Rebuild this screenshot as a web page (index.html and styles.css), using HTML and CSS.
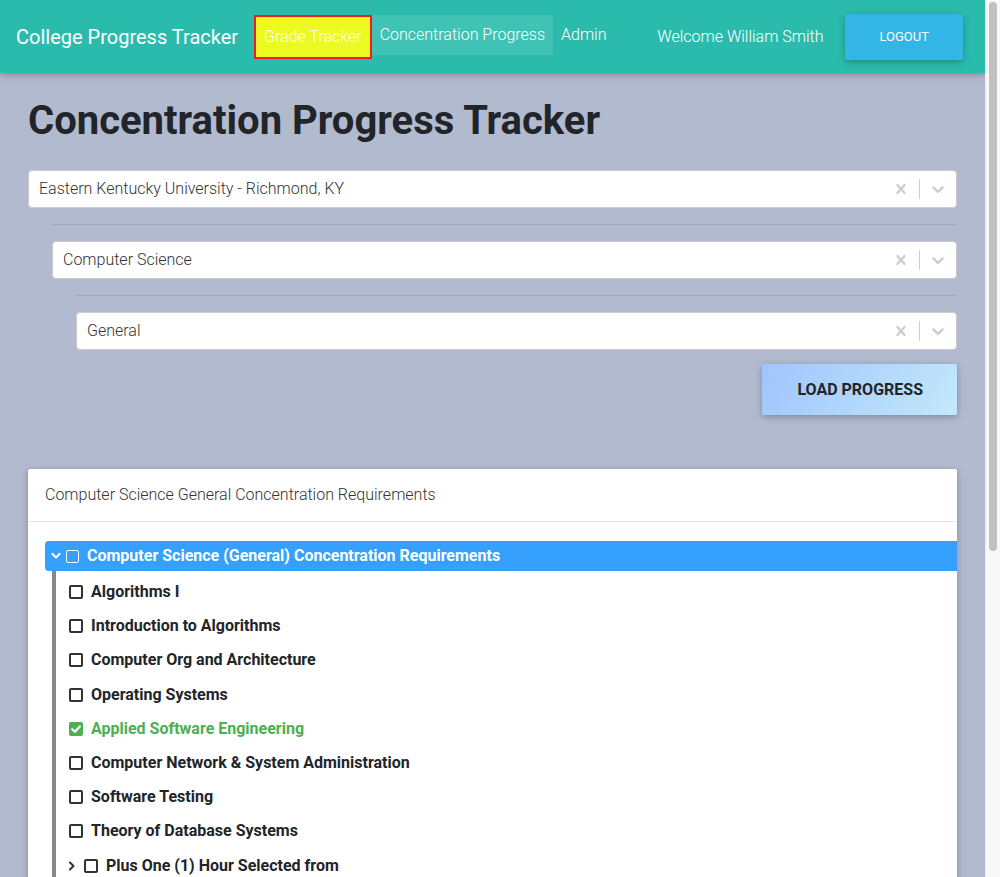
FILE: index.html
```html
<!DOCTYPE html>
<html lang="en">
<head>
<meta charset="utf-8">
<title>Concentration Progress Tracker</title>
<link rel="stylesheet" href="styles.css">
</head>
<body>
<div class="app">
<nav class="navbar">
  <a class="brand" href="#">College Progress Tracker</a>
  <ul class="nav-links">
    <li><a class="nav-link nav-link-highlight" href="#">Grade Tracker</a></li>
    <li><a class="nav-link nav-link-active" href="#">Concentration Progress</a></li>
    <li><a class="nav-link" href="#">Admin</a></li>
  </ul>
  <div class="nav-right">
    <span class="welcome">Welcome William Smith</span>
    <button class="btn-logout" type="button">Logout</button>
  </div>
</nav>

<main class="page">
  <h1 class="title">Concentration Progress Tracker</h1>

  <div class="select-group">
    <div class="select">
      <div class="select-value">Eastern Kentucky University - Richmond, KY</div>
      <div class="select-indicators">
        <span class="indicator"><svg viewBox="0 0 20 20" width="20" height="20"><path d="M14.348 14.849c-0.469 0.469-1.229 0.469-1.697 0l-2.651-3.030-2.651 3.029c-0.469 0.469-1.229 0.469-1.697 0-0.469-0.469-0.469-1.229 0-1.697l2.758-3.15-2.759-3.152c-0.469-0.469-0.469-1.228 0-1.697s1.228-0.469 1.697 0l2.652 3.031 2.651-3.031c0.469-0.469 1.228-0.469 1.697 0s0.469 1.229 0 1.697l-2.758 3.152 2.758 3.15c0.469 0.469 0.469 1.229 0 1.698z"/></svg></span>
        <span class="indicator-sep"></span>
        <span class="indicator"><svg viewBox="0 0 20 20" width="20" height="20"><path d="M4.516 7.548c0.436-0.446 1.043-0.481 1.576 0l3.908 3.747 3.908-3.747c0.533-0.481 1.141-0.446 1.574 0 0.436 0.445 0.408 1.197 0 1.615-0.406 0.418-4.695 4.502-4.695 4.502-0.217 0.223-0.502 0.335-0.787 0.335s-0.57-0.112-0.789-0.335c0 0-4.287-4.084-4.695-4.502s-0.436-1.17 0-1.615z"/></svg></span>
      </div>
    </div>

    <div class="nested">
      <hr class="divider">
      <div class="select">
        <div class="select-value">Computer Science</div>
        <div class="select-indicators">
          <span class="indicator"><svg viewBox="0 0 20 20" width="20" height="20"><path d="M14.348 14.849c-0.469 0.469-1.229 0.469-1.697 0l-2.651-3.030-2.651 3.029c-0.469 0.469-1.229 0.469-1.697 0-0.469-0.469-0.469-1.229 0-1.697l2.758-3.15-2.759-3.152c-0.469-0.469-0.469-1.228 0-1.697s1.228-0.469 1.697 0l2.652 3.031 2.651-3.031c0.469-0.469 1.228-0.469 1.697 0s0.469 1.229 0 1.697l-2.758 3.152 2.758 3.15c0.469 0.469 0.469 1.229 0 1.698z"/></svg></span>
          <span class="indicator-sep"></span>
          <span class="indicator"><svg viewBox="0 0 20 20" width="20" height="20"><path d="M4.516 7.548c0.436-0.446 1.043-0.481 1.576 0l3.908 3.747 3.908-3.747c0.533-0.481 1.141-0.446 1.574 0 0.436 0.445 0.408 1.197 0 1.615-0.406 0.418-4.695 4.502-4.695 4.502-0.217 0.223-0.502 0.335-0.787 0.335s-0.57-0.112-0.789-0.335c0 0-4.287-4.084-4.695-4.502s-0.436-1.17 0-1.615z"/></svg></span>
        </div>
      </div>

      <div class="nested">
        <hr class="divider">
        <div class="select">
          <div class="select-value">General</div>
          <div class="select-indicators">
            <span class="indicator"><svg viewBox="0 0 20 20" width="20" height="20"><path d="M14.348 14.849c-0.469 0.469-1.229 0.469-1.697 0l-2.651-3.030-2.651 3.029c-0.469 0.469-1.229 0.469-1.697 0-0.469-0.469-0.469-1.229 0-1.697l2.758-3.15-2.759-3.152c-0.469-0.469-0.469-1.228 0-1.697s1.228-0.469 1.697 0l2.652 3.031 2.651-3.031c0.469-0.469 1.228-0.469 1.697 0s0.469 1.229 0 1.697l-2.758 3.152 2.758 3.15c0.469 0.469 0.469 1.229 0 1.698z"/></svg></span>
            <span class="indicator-sep"></span>
            <span class="indicator"><svg viewBox="0 0 20 20" width="20" height="20"><path d="M4.516 7.548c0.436-0.446 1.043-0.481 1.576 0l3.908 3.747 3.908-3.747c0.533-0.481 1.141-0.446 1.574 0 0.436 0.445 0.408 1.197 0 1.615-0.406 0.418-4.695 4.502-4.695 4.502-0.217 0.223-0.502 0.335-0.787 0.335s-0.57-0.112-0.789-0.335c0 0-4.287-4.084-4.695-4.502s-0.436-1.17 0-1.615z"/></svg></span>
          </div>
        </div>
      </div>
    </div>
  </div>

  <div class="actions">
    <button class="btn-load" type="button">Load Progress</button>
  </div>

  <section class="card">
    <div class="card-header">Computer Science General Concentration Requirements</div>
    <div class="card-body">
      <div class="tree">
        <div class="tree-row tree-root">
          <span class="caret"><svg viewBox="0 0 10 6" width="10" height="6"><polyline points="1.5,1 5,4.5 8.5,1"/></svg></span>
          <span class="cb cb-light"></span>
          <span class="tree-label">Computer Science (General) Concentration Requirements</span>
        </div>
        <ul class="tree-children">
          <li class="tree-row"><span class="cb"></span><span class="tree-label">Algorithms I</span></li>
          <li class="tree-row"><span class="cb"></span><span class="tree-label">Introduction to Algorithms</span></li>
          <li class="tree-row"><span class="cb"></span><span class="tree-label">Computer Org and Architecture</span></li>
          <li class="tree-row"><span class="cb"></span><span class="tree-label">Operating Systems</span></li>
          <li class="tree-row tree-done"><span class="cb cb-checked"><svg viewBox="0 0 14 14" width="14" height="14"><polyline points="3.2,7.2 6,9.8 10.8,4.4"/></svg></span><span class="tree-label">Applied Software Engineering</span></li>
          <li class="tree-row"><span class="cb"></span><span class="tree-label">Computer Network &amp; System Administration</span></li>
          <li class="tree-row"><span class="cb"></span><span class="tree-label">Software Testing</span></li>
          <li class="tree-row"><span class="cb"></span><span class="tree-label">Theory of Database Systems</span></li>
          <li class="tree-row"><span class="caret caret-dark"><svg viewBox="0 0 6 10" width="6" height="10"><polyline points="1,1.5 4.5,5 1,8.5"/></svg></span><span class="cb"></span><span class="tree-label">Plus One (1) Hour Selected from</span></li>
        </ul>
      </div>
    </div>
  </section>
</main>
</div>

<div class="scrollbar" aria-hidden="true"><div class="scrollbar-thumb"></div></div>
</body>
</html>
```

FILE: styles.css
```css
* { box-sizing: border-box; }

html, body {
  margin: 0;
  padding: 0;
}

body {
  font-family: Roboto, "Liberation Sans", Arial, sans-serif;
  font-weight: 300;
  font-size: 16px;
  background: #b1bacf;
  color: #212529;
}

.app {
  margin-right: 15px;
}

/* ---------- Fake classic scrollbar (overlays the right edge) ---------- */
.scrollbar {
  position: fixed;
  top: 0;
  right: 0;
  width: 15px;
  height: 100vh;
  background: #f8f8f8;
  border-left: 1px solid #ececec;
  z-index: 10;
}

.scrollbar-thumb {
  margin: 2px 3px 0 3px;
  height: 549px;
  background: #c1c1c1;
  border-radius: 4px;
}

/* ---------- Navbar ---------- */
.navbar {
  display: flex;
  align-items: center;
  height: 73px;
  padding: 0 22px 0 16px;
  background: #2bbbad;
  box-shadow: 0 2px 5px 0 rgba(0,0,0,.16), 0 2px 10px 0 rgba(0,0,0,.12);
  position: relative;
  z-index: 2;
}

.brand {
  color: #fff;
  font-size: 20px;
  font-weight: 400;
  line-height: 30px;
  text-decoration: none;
}

.nav-links {
  list-style: none;
  margin: 15px 0 0 16px;
  padding: 0;
  display: flex;
  align-items: flex-start;
  align-self: flex-start;
}

.nav-link {
  display: block;
  padding: 8px;
  line-height: 24px;
  font-size: 16px;
  font-weight: 300;
  color: #fff;
  text-decoration: none;
}

.nav-link-highlight {
  background: #ecf922;
  border: 2px solid #f21c1c;
}

.nav-link-active {
  background: rgba(255,255,255,.1);
}

.nav-right {
  margin-left: auto;
  display: flex;
  align-items: center;
  gap: 22px;
}

.welcome {
  color: #fff;
  font-size: 16px;
  font-weight: 300;
  line-height: 24px;
}

.btn-logout {
  border: 0;
  background: #33b5e5;
  color: #fff;
  font-family: inherit;
  font-size: 13px;
  font-weight: 400;
  text-transform: uppercase;
  line-height: 20px;
  padding: 13px 34px;
  border-radius: 2px;
  box-shadow: 0 2px 5px 0 rgba(0,0,0,.16), 0 2px 10px 0 rgba(0,0,0,.12);
}

/* ---------- Page ---------- */
.page {
  padding: 24px 28px 40px;
}

.title {
  margin: 0 0 25px;
  font-size: 40px;
  font-weight: 700;
  line-height: 48px;
  color: #212529;
}

/* ---------- Select ---------- */
.select {
  display: flex;
  align-items: center;
  min-height: 38px;
  background: #fff;
  border: 1px solid #ccc;
  border-radius: 4px;
}

.select-value {
  flex: 1;
  padding: 2px 8px;
  margin-left: 2px;
  color: #333;
  font-size: 16px;
  font-weight: 300;
  line-height: 24px;
}

.select-indicators {
  display: flex;
  align-items: stretch;
  align-self: stretch;
}

.indicator {
  display: flex;
  align-items: center;
  padding: 8px;
}

.indicator svg {
  display: block;
  fill: #ccc;
}

.indicator-sep {
  width: 1px;
  margin: 8px 0;
  background: #ccc;
}

.nested {
  margin-left: 24px;
}

.divider {
  margin: 16px 0;
  border: 0;
  border-top: 1px solid rgba(0,0,0,.1);
}

/* ---------- Load button ---------- */
.actions {
  display: flex;
  justify-content: flex-end;
  margin-top: 14px;
}

.btn-load {
  border: 0;
  background: linear-gradient(120deg, #a1c4fd 0%, #c2e9fb 100%);
  color: #212529;
  font-family: inherit;
  font-size: 16px;
  font-weight: 700;
  text-transform: uppercase;
  line-height: 19px;
  padding: 16px 34px 16px 35px;
  border-radius: 2px;
  box-shadow: 0 2px 5px 0 rgba(0,0,0,.16), 0 2px 10px 0 rgba(0,0,0,.12);
}

/* ---------- Card ---------- */
.card {
  margin-top: 54px;
  background: #fff;
  border-radius: 2px;
  box-shadow: 0 2px 5px 0 rgba(0,0,0,.16), 0 2px 10px 0 rgba(0,0,0,.12);
}

.card-header {
  padding: 14px 17px;
  line-height: 24px;
  font-size: 16px;
  font-weight: 300;
  color: #333;
  border-bottom: 1px solid #e5e5e5;
}

.card-body {
  padding: 19px 0 20px 17px;
}

/* ---------- Tree ---------- */
.tree-row {
  display: flex;
  align-items: center;
  height: 34.2px;
}

.tree-label {
  font-size: 16px;
  font-weight: 700;
  line-height: 24px;
  color: #212529;
}

.tree-root {
  height: 30px;
  padding-left: 6px;
  background: #35a0fe;
  border-radius: 4px 0 0 4px;
}

.tree-root .tree-label {
  color: #fff;
}

.caret {
  display: flex;
  align-items: center;
  width: 15px;
}

.caret svg {
  display: block;
  fill: none;
  stroke: #fff;
  stroke-width: 2;
  stroke-linecap: round;
  stroke-linejoin: round;
}

.caret-dark svg {
  stroke: #333;
}

.cb {
  flex: none;
  width: 14px;
  height: 14px;
  margin-right: 8px;
  border: 2px solid #333;
  border-radius: 2px;
  display: flex;
  align-items: center;
  justify-content: center;
}

.cb-light {
  width: 13px;
  height: 13px;
  border: 1.5px solid #fff;
  margin-right: 8px;
}

.cb-checked {
  background: #4caf50;
  border-color: #4caf50;
}

.cb-checked svg {
  flex: none;
  fill: none;
  stroke: #fff;
  stroke-width: 2.2;
  stroke-linecap: round;
  stroke-linejoin: round;
}

.tree-done .tree-label {
  color: #4caf50;
}

.tree-children {
  list-style: none;
  margin: 0 0 0 7px;
  padding: 4px 0 0 13px;
  border-left: 4px solid #898989;
}
```
